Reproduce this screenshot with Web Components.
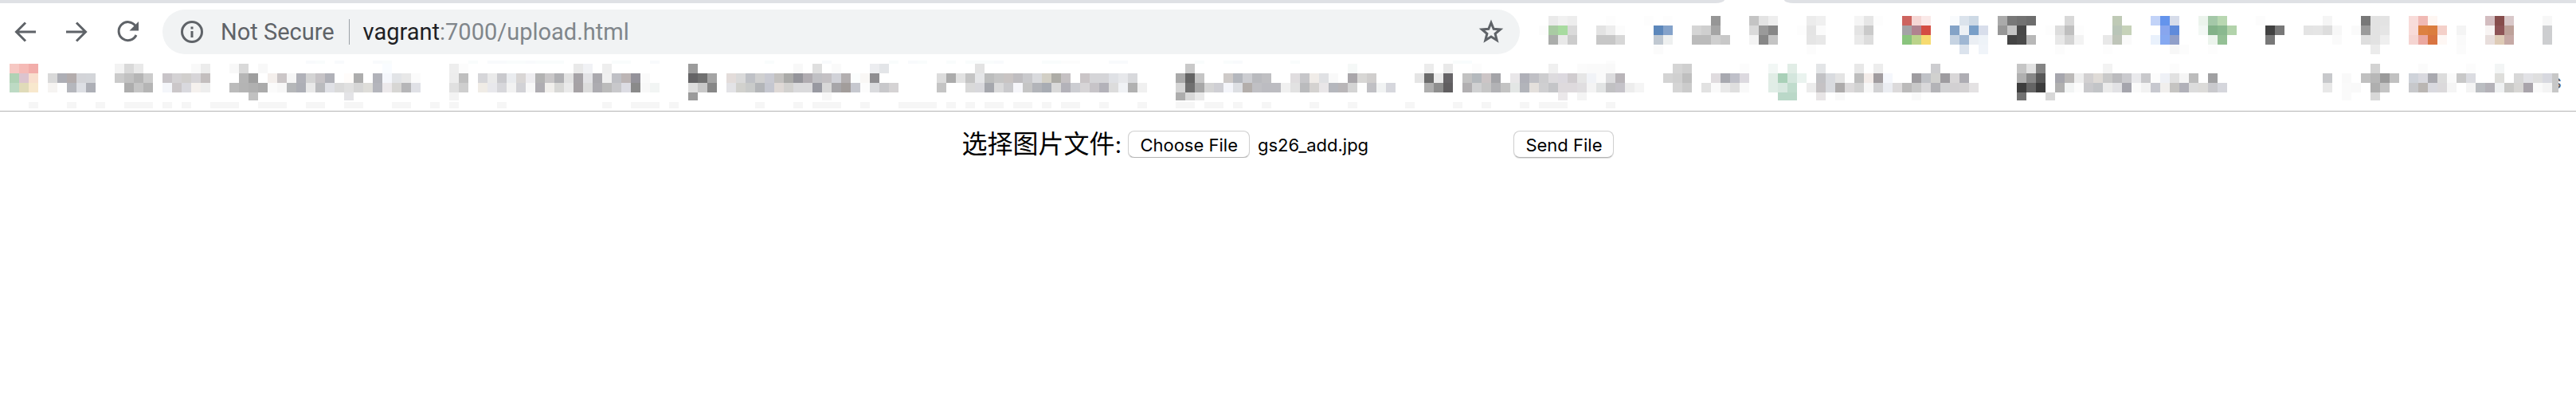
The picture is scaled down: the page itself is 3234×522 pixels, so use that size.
<!DOCTYPE html>
<html lang="zh">
<head>
<meta charset="utf-8">
<title>upload.html</title>
<style>
  body {
    margin: 0;
    background: #fff;
    font-family: Inter, "Noto Sans CJK SC", sans-serif;
  }
</style>
</head>
<body>
<browser-window>
  <tab-strip slot="chrome"></tab-strip>
  <tool-bar slot="chrome">
    <address-bar host="vagrant" path=":7000/upload.html">Not Secure</address-bar>
    <pixel-mosaic slot="extensions" name="extensions"></pixel-mosaic>
  </tool-bar>
  <bookmarks-bar slot="chrome">
    <pixel-mosaic name="bookmarks"></pixel-mosaic>
    <span slot="last">s</span>
  </bookmarks-bar>
  <upload-form filename="gs26_add.jpg">选择图片文件:</upload-form>
</browser-window>

<script>
// One line per run of cells: "row column colours...".
// Two digits stand for a grey, six for a full colour.
const mosaics = {
  extensions: {
    x: 159,
    width: 1326,
    rows: { A: [8, 12], B: [20, 12], C: [32, 12], D: [44, 12] },
    height: 56,
    cells: `
A 162 ea f1 ed
A 168 fd
A 172 fd
A 174 fd
A 179 96
A 183 c4 e3 ee
A 189 ec f0
A 194 f5 e6 fd
A 199 cd645f f5d7d5 fae9e8
A 204 f9fbfd dbe3ec cdd9e5
A 209 aa 78 72 6d
A 216 d8
A 221 bfcab6
A 225 c2d3f8 6494ec d6dcea
A 230 ecf4ed a4c8a8 b8d7b1
A 236 fc
A 243 f5
A 247 78 e2 e3
A 252 f8dcda f0b9b4 fef6f2
A 260 d3bdc0 864d4c d9c8c9
A 266 f7
B 161 fc a9cba3 a8dba0 da
B 167 e3 ed fc
B 173 5c87bb 84a2ca
B 177 d5 cf a5
B 183 da 9a 87
B 188 fd e4 fb
B 194 e4 ca
B 199 a4a3a6 b0838f d44e43
B 204 84a3c7 edf1f5 799fc8 d8deeb
B 209 97 c5 48
B 214 fd dd bf fd
B 221 b9c5b8 c6d2b9
B 226 88a6ee 5f8bdb
B 230 f3f8f5 83b289 8ab98f b2d3ab
B 237 41 78
B 241 e4 e5 dd f7
B 246 fa 9a e2 e5
B 252 f8dbd9 dd8141 db7d3e f4d0c9
B 257 f4
B 260 f8f4f3 8d5456 bda199
B 266 cdced0
C 162 abadab e9 cc
C 167 c7 c7 d7
C 173 c0c8d1 eef0f0
C 177 bb bb cf c8
C 183 f4 87 c4
C 189 e5 e8
C 194 ea dd
C 199 8ac47d bbd38a f7db70
C 204 c6d3e2 9fb7d3 ebeff4 eef3f8
C 210 44 4a b8
C 215 e8 d4 f3
C 220 e8 bfc5b9 fa
C 225 e9f1fc 86a9f1 909fc9
C 231 ecf4ed 94c095
C 237 78
C 244 fa
C 247 de e2 ef
C 252 f5d5d2 eba8a0 d97441 fef7f4
C 257 fa
C 260 e8dedc decbb6 c6a9a5
C 266 cdced0
D 173 fb
D 189 fc
D 205 dbe3ed
D 207 f0f4f9
D 215 fc
D 220 fd
D 227 f7 fc
D 231 fd
D 248 eb
D 257 fb`
  },
  bookmarks: {
    x: 0,
    width: 3212,
    rows: { Z: [0, 4], A: [4, 12], B: [16, 12], C: [28, 12], D: [40, 10], E: [52, 8] },
    height: 60,
    cells: `
Z 32 f8fafc f9fcfc
Z 35 f8fafc
Z 39 f8fafc f9fcfc
Z 49 f9fcfc
Z 51 f8fafc f8fafc f9fcfc f9fcfc f8fafc f9fcfc f9fcfc f9fcfc
Z 64 f9fcfc f9fcfc
Z 68 f8fafc
Z 80 f9fcfc
Z 86 f8fafc
Z 93 f9fcfc
Z 95 f8fafc f9fcfc
Z 99 f9fcfc
Z 101 f9fcfc f9fcfc f9fcfc f8fafc
Z 109 f9fcfc f9fcfc fc fc
Z 116 f8fafc f8fafc
Z 125 f9fcfc
Z 128 f9fcfc f8fafc
Z 135 f9fcfc
Z 152 f9fcfc f8fcfd
Z 168 fc
A 1 f6c8c3 f5bab6 f2adaa
A 12 f3 d9 e9
A 20 f9 ec
A 24 f8 d9
A 27 f8
A 40 f9fcff
A 47 ee fc
A 60 e9 f1f2f5
A 63 ee
A 72 9b
A 83 f8
A 85 df
A 87 fa
A 91 ecedf0 e3e5e8
A 102 e3
A 124 c9
A 141 f5f8f7
A 149 ec
A 151 e9
A 154 fc
A 162 f0
A 165 fb fa fa f9
A 175 d5 cf
A 182 fc
A 185 f2f7f5
A 187 e1ede6
A 190 e3e5e7
A 194 e8
A 196 ed
A 202 cdcdd0
A 211 c5 e2 84
A 220 f3
A 227 fc
A 248 d3
A 253 fb
A 258 fc
A 261 f3f5f5
B 1 b0d2b5 dcc4cf f9dfce
B 5 d9 adaeb5 b3acac d3d4d8 d3d5d9
B 12 cb c1 b5 cc
B 17 c8c4c8 d4d2d4 d1cfcd d7d5d8 c3bebe
B 25 b5 9e
B 28 f4efec cbc6c7 f6 b0b1b8 d4 c6c3c6 b0b1b8
B 36 fffcfa ad
B 39 b1b2b9 f5f7fc e2e4e7 e8 fb
B 47 ed bf
B 50 d6d6d9 ea c9c9cd eaecef d9d6d5 eeedf0 b2 c9c7c8 b0b0b3 e2 a6a3a7 e3e3e6 aaa9ae f0 bfc0c5 bcb5b5 94929a fa
B 72 656466 70 a4
B 76 e3dcda da bfc1c6 d0 c9cad2 c3c1bf aaaaa8 94949a b0acb1 c0c0c4 c4c1c4 d1d2d8 b3afb0 fbfdfd f9f7f5 8f8e91
B 98 dc ab e2 c4 e5e6e8 bcbdbd c5 c9c4c3 bfbdc0 c9c9cc d9dadd d2cfc5 adaca6 c5c1c3
B 113 cac5c7 d5d5d8 d5d5d8 dfe1e5 e7e8eb d8d9dc
B 123 a9 64 c5
B 128 cecac8 b4b7bd cccdd1 b9babe bfbfc2
B 135 e0dddf c6c6c9 f0ece8 e0e1e4 f9
B 141 a9a6aa d8d7d5 d0cecd
B 148 e5 6b eb 666467
B 153 c2 b4b9bd ccc5c6 a4a4a8
B 158 e9e7e9 afb0b8 c0c0c5 cdcdcf dddbde dcd9df d0cccf e6 f1f3f7 fa dcdcde b9b5b9
B 174 d4 d0 bf
B 179 e0dcdf a8a9b0 bfc0c9 dcd9df
B 185 e1ede6 a9d0b8 d4e6dd eaf3ef
B 190 c2c2c5 d9dbdf e4 fe bd f3ece9 a19c9f f5f7fc
B 200 9e9ca0 c0c2c7 d1d1cf 9e9ca0 d9d7d8 aeadb3
B 211 b0 88 58
B 215 a6a6ad bbb9b8 ee d2d0d1 dfdbd7 c9 bbbbbe cacace e9e9ec c8c8cb fc eff1f6 e1 f5 bc
B 231 a0a0a2
B 243 c7c8cb
B 245 f9
B 247 c0 b7 9a c1
B 252 cfd3da d9d9df a9a9af dc fa c8 dbdce1
B 261 dededb
B 263 d8 e2e2e6 df d7d8df c7
C 1 bddac4 e0dbb9 f8e8cd
C 5 f6f4f2 fe b5b7bd dddfe4 adafb6
C 13 ad c5 b5
C 17 f4f6fa cbc7c9 d9d9de f5f1ee ee
C 24 bb b4 b0 ab fb f7 b5b7b9 adafb6 e9 babbbe e0e1e6 da e0 d6 deddd9 b4b5bc ece9eb d7d6d4 b6b6b8 e0e1e6
C 47 e0 ce
C 50 f0ece6 e8e8ec d7d7db f2 d2d2d6 f8 afadb2 f1efec d8d8d6 ea a6a2a5 dc adacb1 bb c8c8cb dcdce3 8a f8 f2f5f4
C 72 dd c8 87
C 76 e3e3e6 d1d1cd c9cbca b3b5b8 c5c7d0 dfd9d6 d2d1cf dadadc dadadc 9899a1 d8 a7a6a9 a29d9b c6c8cf fc dadbde c8c8cb d5d3d4
C 98 c4
C 101 d9 d8d8dc a5a7ad dadadb cacacd f6f6fa c5 b2b4b9 a8acb3 d9 b3b2b9 cccdd2 d7d5d7 c7c4c8 b3b2b9 dc f0f2f5 b1 f0
C 123 d5 70 a7 d5 cfcfd4 f4f5fa dddfe3 b3aeab c0c0c4 bcbcc1 bcbcc1 f0
C 135 e2 babbbd d4d2d0 e9e6e8 b5b7bd b9b6b8 d4 fe c0c0c4 f1f3f3 d6d7dd
C 149 ae 8e 605e60
C 153 b1afb1 d0d1d2 c6 b2b2b5 c3 e3e6e5 b2b4ba e4e0dc cfcfd1 c4c5c8 dedadd dedadd e0dee0 f4 e2e4e4 c1c1c3 c5c3c9 ed f5
C 175 d5 cb
C 178 e2 fa e9 df f9
C 185 e0ede6 d8e8e0 c0dccd
C 189 ec c5c2c4 d9dbdf adabab dcdadb d2 f7 d2d2d4 ebedf2 dcdadb bbbaba c8 d9d8da b3b3b7 d2d2d4 d2d0d2 d4d2d3 e4e2e3
C 211 3d 65 3c
C 215 b0 f2f4f4 fc c9c9cc c2c4c7 eb e2e2e5 a5a5ad fa f2 c7c8cf f1efed c5c4c2 b1b1b9 dc dcdbd9 c9c9cd d5d6dc
C 243 e8
C 245 fa f9
C 248 af c4
C 252 c7c8cb bab6b3 d9d9df dbd9db f5
C 258 f4 babdc1 b4b2b8 eff1f2 c9c9c7 d7d6d4 a9a4ab fa f4 c7
D 26 c1
D 36 e4e4e7
D 47 f3
D 72 9b
D 86 f7
D 123 ad d8 e9
D 163 ebe8ea
D 165 f4
D 186 bad8c8 bad8c8
D 190 e8e5e6
D 192 f9
D 200 f9
D 211 72
D 214 d8
D 245 fa
D 248 d8
E 3 f6
E 7 f6
E 10 f6
E 13 f6 f6 f6
E 17 f6
E 19 f6
E 22 f6 f6 f6
E 27 f6 f6 f6
E 32 f6 f6
E 36 f6 f6
E 41 f6 f6
E 45 f6
E 47 f6
E 52 f6
E 63 f6
E 66 f6 f6 f6
E 70 f6
E 79 f6
E 83 f6
E 85 f6 f6 f6
E 90 f6
E 94 f6 f6 f6 f6
E 99 f6
E 101 f6
E 103 f6 f6
E 106 f6 f6
E 109 f6
E 111 f6 f6
E 115 f6
E 119 f6
E 123 f6 f6
E 126 f6 f6
E 129 f6
E 132 f6
E 137 f6
E 141 f6
E 147 f6
E 152 f6
E 155 f6
E 159 f6
E 161 f6 f6 f6
E 168 f6`
  }
};

const CELL = 12;

class PixelMosaic extends HTMLElement {
  constructor() {
    super();
    this.attachShadow({ mode: "open" });
  }

  connectedCallback() {
    const { x, width, height, rows, cells } = mosaics[this.getAttribute("name")];
    const rects = cells
      .trim()
      .split("\n")
      .map((line) => {
        const [row, start, ...colours] = line.split(" ");
        const [y, h] = rows[row];
        return colours
          .map((c, i) => {
            const fill = c.length === 2 ? c + c + c : c;
            const left = (Number(start) + i - x) * CELL;
            return `<rect x="${left}" y="${y}" width="${CELL}" height="${h}" fill="#${fill}"/>`;
          })
          .join("");
      })
      .join("");
    this.shadowRoot.innerHTML = `
      <style>
        :host { display: block; }
        svg { display: block; }
      </style>
      <svg width="${width}" height="${height}" shape-rendering="crispEdges" aria-hidden="true">${rects}</svg>
    `;
  }
}
customElements.define("pixel-mosaic", PixelMosaic);

class BrowserWindow extends HTMLElement {
  constructor() {
    super();
    this.attachShadow({ mode: "open" });
    this.shadowRoot.innerHTML = `
      <style>
        :host { display: block; }
        header { border-bottom: 1px solid #b4b4b4; }
        main { padding: 24px 16px; }
      </style>
      <header><slot name="chrome"></slot></header>
      <main><slot></slot></main>
    `;
  }
}
customElements.define("browser-window", BrowserWindow);

class TabStrip extends HTMLElement {
  constructor() {
    super();
    this.attachShadow({ mode: "open" });
    this.shadowRoot.innerHTML = `
      <style>
        :host { display: flex; gap: 75px; height: 4px; }
        div { background: #dfe1e5; }
        .before { flex: 2165; border-bottom-right-radius: 12px 4px; }
        .after { flex: 994; border-bottom-left-radius: 12px 4px; }
      </style>
      <div class="before"></div>
      <div class="after"></div>
    `;
  }
}
customElements.define("tab-strip", TabStrip);

class ToolBar extends HTMLElement {
  constructor() {
    super();
    this.attachShadow({ mode: "open" });
    this.shadowRoot.innerHTML = `
      <style>
        :host { display: flex; align-items: center; padding: 8px 0; }
        nav { display: flex; gap: 32px; padding: 0 28px 0 16px; }
        button {
          width: 32px;
          height: 32px;
          padding: 0;
          border: 0;
          background: none;
        }
        svg { display: block; fill: none; stroke: #5f6368; stroke-width: 3; }
        ::slotted(address-bar) { flex: 1; }
      </style>
      <nav>
        <button aria-label="Back">
          <svg width="32" height="32"><path d="M29 16H5M16 4.500L4.500 16L16 27.500"/></svg>
        </button>
        <button aria-label="Forward">
          <svg width="32" height="32"><path d="M3 16H27M16 4.500L27.500 16L16 27.500"/></svg>
        </button>
        <button aria-label="Reload">
          <svg width="32" height="32">
            <path d="M26 8.500A11.500 11.500 0 1 0 27 20"/>
            <path d="M30 3V14.500H18.500Z" fill="#5f6368" stroke="none"/>
          </svg>
        </button>
      </nav>
      <slot></slot>
      <slot name="extensions"></slot>
    `;
  }
}
customElements.define("tool-bar", ToolBar);

class AddressBar extends HTMLElement {
  constructor() {
    super();
    this.attachShadow({ mode: "open" });
    this.shadowRoot.innerHTML = `
      <style>
        :host {
          display: flex;
          align-items: center;
          height: 56px;
          padding: 0 20px 0 22px;
          box-sizing: border-box;
          border-radius: 28px;
          background: #f1f3f4;
          color: #5f6368;
          font: 29px/40px Roboto, sans-serif;
        }
        svg { display: block; }
        .security { margin-left: 21px; }
        .divider { width: 1px; height: 32px; margin: 0 17px 0 18px; background: #9aa0a6; }
        label { color: #202124; }
        input {
          flex: 1;
          min-width: 0;
          padding: 0;
          border: 0;
          outline: 0;
          background: none;
          color: #80868b;
          font: inherit;
        }
        button { padding: 0; border: 0; background: none; }
      </style>
      <svg width="30" height="30" fill="#5f6368">
        <circle cx="15" cy="15" r="12.500" fill="none" stroke="#5f6368" stroke-width="3"/>
        <path d="M13.500 8.500h3v3h-3zM13.500 14h3v8h-3z"/>
      </svg>
      <span class="security"><slot></slot></span>
      <span class="divider"></span>
      <label for="url"></label>
      <input id="url" type="text" spellcheck="false">
      <button aria-label="Bookmark this page">
        <svg width="32" height="32" fill="none" stroke="#5f6368" stroke-width="3">
          <path d="M16 4.500L19.200 12.300L27.500 12.900L21.100 18.300L23.200 26.500L16 22L8.800 26.500L10.900 18.300L4.500 12.900L12.800 12.300Z"/>
        </svg>
      </button>
    `;
  }

  connectedCallback() {
    this.shadowRoot.querySelector("label").textContent = this.getAttribute("host");
    this.shadowRoot.getElementById("url").value = this.getAttribute("path");
  }
}
customElements.define("address-bar", AddressBar);

class BookmarksBar extends HTMLElement {
  constructor() {
    super();
    this.attachShadow({ mode: "open" });
    this.shadowRoot.innerHTML = `
      <style>
        :host { display: grid; padding: 0 18px 3px 0; color: #5f6368; font: 24px/54px Roboto, sans-serif; }
        ::slotted(*) { grid-area: 1 / 1; }
        ::slotted(span) { justify-self: end; }
        ::slotted(pixel-mosaic) { z-index: 1; }
      </style>
      <slot></slot>
      <slot name="last"></slot>
    `;
  }
}
customElements.define("bookmarks-bar", BookmarksBar);

class UploadForm extends HTMLElement {
  constructor() {
    super();
    this.attachShadow({ mode: "open" });
    this.shadowRoot.innerHTML = `
      <style>
        :host { display: block; color: #000; }
        form { display: flex; justify-content: center; align-items: center; gap: 8px; }
        label { font: 32px/34px "Liberation Serif", "Noto Sans CJK SC", serif; }
        input { width: 476px; color: #000; font: 22px/30px Inter, sans-serif; }
        button, ::file-selector-button {
          box-sizing: border-box;
          height: 34px;
          margin: 0;
          padding: 2px 14px 0;
          border: 1px solid #d0d0d0;
          border-bottom-color: #b4b4b4;
          border-radius: 8px;
          background: #fff;
          box-shadow: 0 1px 1px #0002;
          color: #000;
          font: 22px/30px Inter, sans-serif;
        }
        ::file-selector-button { margin-right: 10px; }
      </style>
      <form>
        <label for="file"><slot></slot></label>
        <input id="file" type="file" accept="image/*">
        <button type="submit">Send File</button>
      </form>
    `;
  }

  connectedCallback() {
    const transfer = new DataTransfer();
    transfer.items.add(new File([""], this.getAttribute("filename")));
    this.shadowRoot.getElementById("file").files = transfer.files;
  }
}
customElements.define("upload-form", UploadForm);
</script>
</body>
</html>
